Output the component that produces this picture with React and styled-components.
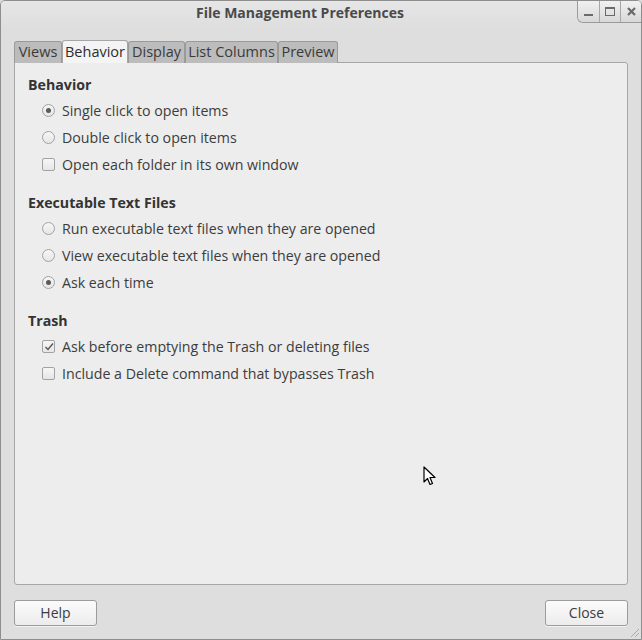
import styled, { createGlobalStyle, css } from "styled-components";

const GlobalStyle = createGlobalStyle`
  html, body {
    margin: 0;
    padding: 0;
    background: #dcdcdc;
  }
  * {
    box-sizing: border-box;
  }
`;

const Window = styled.div`
  position: relative;
  width: 642px;
  height: 640px;
  display: flex;
  flex-direction: column;
  background: #dedede;
  border: 1px solid #8e8e8e;
  border-radius: 5px 5px 0 0;
  font-family: "Open Sans", "Liberation Sans", sans-serif;
  color: #3c3c3c;
  overflow: hidden;
`;

const TitleBar = styled.div`
  display: flex;
  height: 27px;
  background: linear-gradient(#e6e6e6, #dedede);
`;

const Title = styled.div`
  flex: 1;
  padding-left: 22px;
  padding-top: 2px;
  text-align: center;
  font-size: 14px;
  font-weight: 700;
  color: #4a4a4a;
`;

const Controls = styled.div`
  display: flex;
  align-self: flex-start;
  height: 23px;
  border-left: 1px solid #9a9a9a;
  border-bottom: 1px solid #9a9a9a;
  border-bottom-left-radius: 6px;
  overflow: hidden;
  margin-top: -1px;
`;

const ControlButton = styled.div`
  width: 21px;
  height: 100%;
  display: flex;
  align-items: center;
  justify-content: center;
  background: linear-gradient(#f2f2f2, #d8d8d8);
  & + & {
    border-left: 1px solid #a8a8a8;
  }
`;

const Body = styled.div`
  flex: 1;
  display: flex;
  flex-direction: column;
  padding: 12px 13px 0 13px;
`;

const TabStrip = styled.div`
  display: flex;
  align-items: flex-end;
  height: 23px;
  margin-bottom: -1px;
  position: relative;
  z-index: 1;
`;

const Tab = styled.div`
  height: 22px;
  display: flex;
  align-items: center;
  justify-content: center;
  padding-bottom: 3px;
  font-size: 14.5px;
  color: #3a3a3a;
  background: #bcbcbc;
  border: 1px solid #9a9a9a;
  border-bottom: none;
  border-radius: 3px 3px 0 0;
  white-space: nowrap;
  ${(p) =>
    p.$active &&
    css`
      height: 23px;
      padding-bottom: 2px;
      background: #f4f4f4;
      color: #2e2e2e;
      border-color: #a6a6a6;
    `}
`;

const Panel = styled.div`
  flex: 1;
  background: #ededed;
  border: 1px solid #a6a6a6;
  border-radius: 0 3px 3px 3px;
  padding: 12px 13px;
`;

const Section = styled.section`
  & + & {
    margin-top: 15px;
  }
`;

const Heading = styled.div`
  height: 20px;
  line-height: 20px;
  font-size: 14.2px;
  font-weight: 700;
  color: #333;
`;

const Options = styled.div`
  margin-top: 2px;
  padding-left: 14px;
`;

const Row = styled.label`
  height: 27px;
  display: flex;
  align-items: center;
  gap: 7px;
  font-size: 14.2px;
  color: #3c3c3c;
`;

const Indicator = styled.span`
  width: 13px;
  height: 13px;
  flex: none;
  display: flex;
  align-items: center;
  justify-content: center;
  border: 1px solid #a2a2a2;
  background: linear-gradient(#f6f6f6, #e6e6e6);
  border-radius: ${(p) => (p.$kind === "radio" ? "50%" : "2px")};
`;

const Dot = styled.span`
  width: 5px;
  height: 5px;
  border-radius: 50%;
  background: #5a5a5a;
`;

const Footer = styled.div`
  display: flex;
  justify-content: space-between;
  padding: 15px 0 13px 0;
`;

const Button = styled.button`
  width: 83px;
  height: 26px;
  font-family: inherit;
  font-size: 14px;
  color: #3c3c3c;
  border: 1px solid #9c9c9c;
  border-radius: 3px;
  background: linear-gradient(#fbfbfb, #ececec);
  box-shadow: 0 1px 0 rgba(255, 255, 255, 0.6);
  padding: 0 0 2px 0;
`;

const Grip = styled.svg`
  position: absolute;
  right: 1px;
  bottom: 1px;
`;

const Cursor = styled.svg`
  position: absolute;
  left: 422px;
  top: 465px;
`;

const tabs = [
  { label: "Views", width: 48 },
  { label: "Behavior", width: 66, active: true },
  { label: "Display", width: 57 },
  { label: "List Columns", width: 93 },
  { label: "Preview", width: 60 },
];

const sections = [
  {
    title: "Behavior",
    items: [
      { kind: "radio", checked: true, label: "Single click to open items" },
      { kind: "radio", label: "Double click to open items" },
      { kind: "check", label: "Open each folder in its own window" },
    ],
  },
  {
    title: "Executable Text Files",
    items: [
      { kind: "radio", label: "Run executable text files when they are opened" },
      { kind: "radio", label: "View executable text files when they are opened" },
      { kind: "radio", checked: true, label: "Ask each time" },
    ],
  },
  {
    title: "Trash",
    items: [
      { kind: "check", checked: true, label: "Ask before emptying the Trash or deleting files" },
      { kind: "check", label: "Include a Delete command that bypasses Trash" },
    ],
  },
];

function Mark({ kind, checked }) {
  return (
    <Indicator $kind={kind}>
      {checked && kind === "radio" && <Dot />}
      {checked && kind === "check" && (
        <svg width="10" height="10" viewBox="0 0 10 10">
          <path d="M1.5 5 L4 7.5 L9 1.5" fill="none" stroke="#555" strokeWidth="1.4" />
        </svg>
      )}
    </Indicator>
  );
}

export default function App() {
  return (
    <>
      <GlobalStyle />
      <Window>
        <TitleBar>
          <Title>File Management Preferences</Title>
          <Controls>
            <ControlButton>
              <svg width="11" height="11" viewBox="0 0 11 11">
                <rect x="1" y="8" width="9" height="2" fill="#6a6a6a" />
              </svg>
            </ControlButton>
            <ControlButton>
              <svg width="12" height="11" viewBox="0 0 12 11">
                <rect x="1.5" y="1.5" width="9" height="8" fill="none" stroke="#6a6a6a" />
                <rect x="1" y="1" width="10" height="2" fill="#6a6a6a" />
              </svg>
            </ControlButton>
            <ControlButton>
              <svg width="11" height="11" viewBox="0 0 11 11">
                <path d="M2 2 L9 9 M9 2 L2 9" stroke="#6a6a6a" strokeWidth="2.2" />
              </svg>
            </ControlButton>
          </Controls>
        </TitleBar>
        <Body>
          <TabStrip>
            {tabs.map((t) => (
              <Tab key={t.label} $active={t.active} style={{ width: t.width }}>
                {t.label}
              </Tab>
            ))}
          </TabStrip>
          <Panel>
            {sections.map((s) => (
              <Section key={s.title}>
                <Heading>{s.title}</Heading>
                <Options>
                  {s.items.map((it) => (
                    <Row key={it.label}>
                      <Mark kind={it.kind} checked={it.checked} />
                      {it.label}
                    </Row>
                  ))}
                </Options>
              </Section>
            ))}
          </Panel>
          <Footer>
            <Button>Help</Button>
            <Button>Close</Button>
          </Footer>
        </Body>
        <Grip width="12" height="12" viewBox="0 0 12 12">
          <path d="M3 11 L11 3 M7 11 L11 7" stroke="#aaa" strokeWidth="1" />
        </Grip>
        <Cursor width="14" height="22" viewBox="0 0 14 22">
          <path
            d="M1 1 L1 16 L4.5 12.5 L7 18.5 L9.5 17.5 L7 11.5 L12 11.5 Z"
            fill="#fff"
            stroke="#000"
            strokeWidth="1.2"
            strokeLinejoin="round"
          />
        </Cursor>
      </Window>
    </>
  );
}
